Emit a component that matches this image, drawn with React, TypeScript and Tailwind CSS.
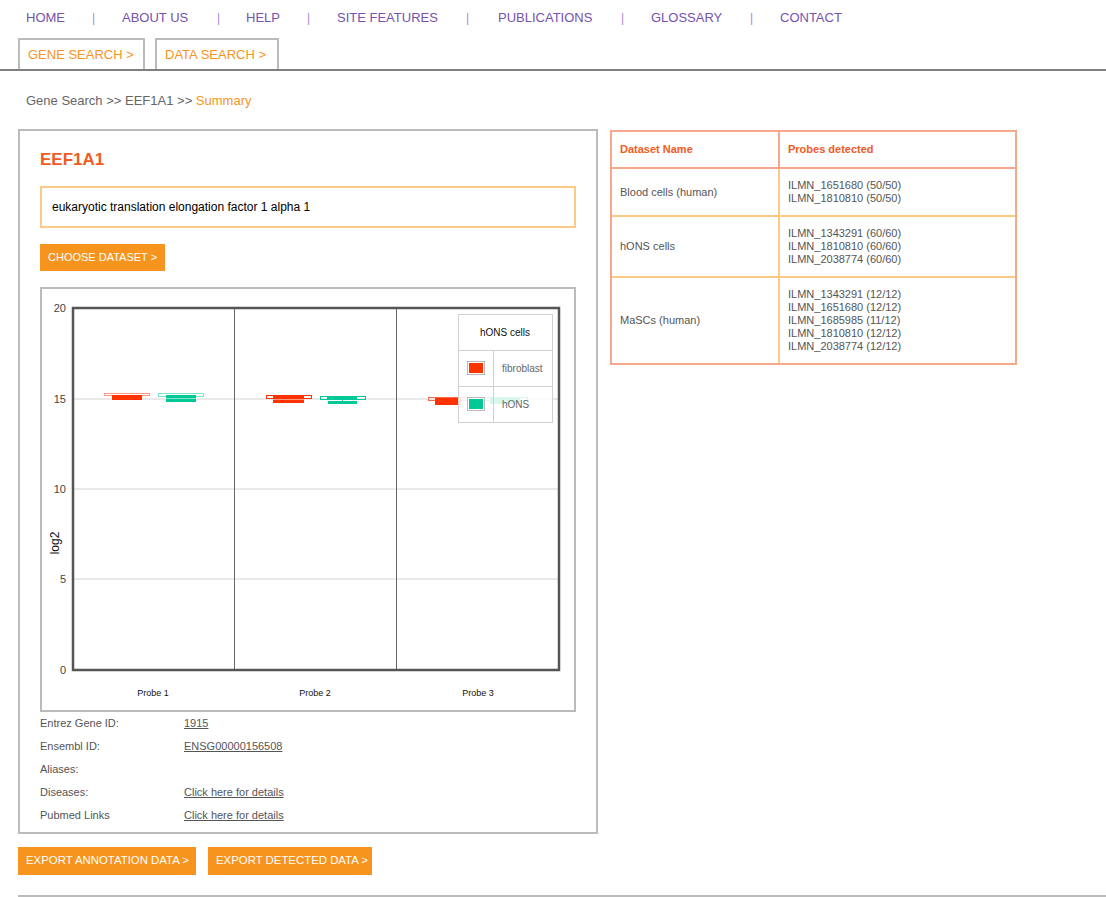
const navItems = [
  { label: "HOME", w: 66, s: 30 },
  { label: "ABOUT US", w: 95, s: 29 },
  { label: "HELP", w: 61, s: 30 },
  { label: "SITE FEATURES", w: 129, s: 32 },
  { label: "PUBLICATIONS", w: 123, s: 30 },
  { label: "GLOSSARY", w: 99, s: 30 },
  { label: "CONTACT", w: 80, s: 0 },
];

const info = [
  { label: "Entrez Gene ID:", value: "1915", link: true },
  { label: "Ensembl ID:", value: "ENSG00000156508", link: true },
  { label: "Aliases:", value: "", link: false },
  { label: "Diseases:", value: "Click here for details", link: true },
  { label: "Pubmed Links", value: "Click here for details", link: true },
];

const datasets = [
  { name: "Blood cells (human)", probes: ["ILMN_1651680 (50/50)", "ILMN_1810810 (50/50)"] },
  { name: "hONS cells", probes: ["ILMN_1343291 (60/60)", "ILMN_1810810 (60/60)", "ILMN_2038774 (60/60)"] },
  {
    name: "MaSCs (human)",
    probes: [
      "ILMN_1343291 (12/12)",
      "ILMN_1651680 (12/12)",
      "ILMN_1685985 (11/12)",
      "ILMN_1810810 (12/12)",
      "ILMN_2038774 (12/12)",
    ],
  },
];

const RED = "#ff3300";
const GREEN = "#00c896";

// coords are relative to the chart box inner corner (page x-42, y-289)
function BoxChart() {
  const yTicks = [
    { v: "20", y: 19 },
    { v: "15", y: 110 },
    { v: "10", y: 200 },
    { v: "5", y: 290 },
    { v: "0", y: 381 },
  ];
  return (
    <svg width="532" height="421" className="block" style={{ fontFamily: "'Liberation Sans', Arial, sans-serif" }}>
      {yTicks.map((t) => (
        <g key={t.v}>
          <line x1="31" x2="517" y1={t.y} y2={t.y} stroke="#d4d4d4" strokeWidth="1" />
          <text x="24" y={t.y + 4} fontSize="11" fill="#444" textAnchor="end">
            {t.v}
          </text>
        </g>
      ))}
      <line x1="192.5" x2="192.5" y1="19" y2="381" stroke="#666" />
      <line x1="354.5" x2="354.5" y1="19" y2="381" stroke="#666" />

      {/* probe 1 */}
      <rect x="62.5" y="104.5" width="45" height="2" fill="none" stroke="#ff9a80" />
      <rect x="70" y="106" width="30" height="5" fill={RED} />
      <rect x="116.5" y="104.5" width="45" height="3" fill="none" stroke="#7fe3c8" />
      <rect x="124" y="106" width="30" height="7" fill={GREEN} />
      <line x1="124" x2="154" y1="109.5" y2="109.5" stroke="#80e3cb" />
      {/* probe 2 */}
      <rect x="224.5" y="106.5" width="45" height="3" fill="none" stroke={RED} />
      <rect x="231" y="107" width="31" height="7" fill={RED} />
      <line x1="231" x2="262" y1="110.5" y2="110.5" stroke="#ff9a80" />
      <rect x="278.5" y="107.5" width="45" height="3" fill="none" stroke={GREEN} />
      <rect x="285" y="107" width="30" height="4" fill={GREEN} />
      <line x1="300.5" x2="300.5" y1="111" y2="113" stroke={GREEN} />
      <rect x="286" y="112" width="29" height="3" fill={GREEN} />
      {/* probe 3 */}
      <rect x="386.5" y="108.5" width="42" height="3" fill="none" stroke="#ff6a4a" />
      <rect x="393" y="109" width="26" height="7" fill={RED} />
      <rect x="440.5" y="108.5" width="45" height="3" fill="none" stroke={GREEN} />
      <rect x="448" y="109" width="30" height="6" fill={GREEN} />

      <rect x="31" y="19" width="486" height="362" fill="none" stroke="#555" strokeWidth="2.5" />

      {/* legend */}
      <g>
        <rect x="416.5" y="25.5" width="94" height="108" fill="#fff" fillOpacity="0.85" stroke="#d0d0d0" />
        <line x1="416.5" x2="510.5" y1="61.5" y2="61.5" stroke="#d0d0d0" />
        <line x1="416.5" x2="510.5" y1="97.5" y2="97.5" stroke="#d0d0d0" />
        <line x1="451.5" x2="451.5" y1="61.5" y2="133.5" stroke="#d0d0d0" />
        <text x="463" y="47" fontSize="10" fill="#111" textAnchor="middle">
          hONS cells
        </text>
        <rect x="425.5" y="72.5" width="17" height="13" fill="#fff" stroke="#bbb" />
        <rect x="427" y="74" width="14" height="10" fill={RED} />
        <text x="460" y="83" fontSize="10" fill="#666">
          fibroblast
        </text>
        <rect x="425.5" y="108.5" width="17" height="13" fill="#fff" stroke="#bbb" />
        <rect x="427" y="110" width="14" height="10" fill={GREEN} />
        <text x="460" y="119" fontSize="10" fill="#666">
          hONS
        </text>
      </g>

      <text x="0" y="0" fontSize="12" fill="#111" textAnchor="middle" transform="translate(17 254) rotate(-90)">
        log2
      </text>
      {[
        { l: "Probe 1", x: 111 },
        { l: "Probe 2", x: 273 },
        { l: "Probe 3", x: 436 },
      ].map((p) => (
        <text key={p.l} x={p.x} y="407" fontSize="9" fill="#111" textAnchor="middle">
          {p.l}
        </text>
      ))}
    </svg>
  );
}

export default function App() {
  return (
    <div className="w-[1106px] min-h-[897px] bg-white font-['Liberation_Sans',Arial,sans-serif]">
      {/* top nav */}
      <div className="flex items-center h-[34px] pt-[2px] pl-[26px] text-[13px] text-[#7552b0]">
        {navItems.map((item) => (
          <div key={item.label} className="flex items-center">
            <span style={{ width: item.w }} className="whitespace-nowrap">
              {item.label}
            </span>
            {item.s > 0 && (
              <span style={{ width: item.s }} className="text-[#a48bd6] text-[12px]">
                |
              </span>
            )}
          </div>
        ))}
      </div>

      <div className="flex items-end gap-[10px] pl-[18px] mt-[4px] border-b-2 border-[#808080]">
        <div className="h-[31px] w-[127px] border-2 border-b-0 border-[#bbb] pl-[8px] flex items-center text-[13px] text-[#f7941d]">
          GENE SEARCH &gt;
        </div>
        <div className="h-[31px] w-[124px] border-2 border-b-0 border-[#bbb] pl-[8px] flex items-center text-[13px] text-[#f7941d]">
          DATA SEARCH &gt;
        </div>
      </div>

      <div className="pl-[18px]">
        <div className="pl-[8px] mt-[22px] h-[16px] text-[13px] leading-[16px] text-[#666]">
          Gene Search &gt;&gt; EEF1A1 &gt;&gt; <span className="text-[#f7941d]">Summary</span>
        </div>

        <div className="flex items-start gap-[12px] mt-[20px]">
          {/* left panel */}
          <div className="w-[580px]">
            <div className="border-2 border-[#bbb] px-[20px] pt-[19px] pb-[5px]">
              <div className="text-[17px] leading-[20px] font-bold text-[#f15a22]">EEF1A1</div>
              <div className="mt-[16px] h-[42px] border-2 border-[#fdc987] pl-[10px] flex items-center text-[12px] text-black">
                eukaryotic translation elongation factor 1 alpha 1
              </div>
              <div className="mt-[16px] inline-flex items-center h-[27px] px-[8px] bg-[#f7941d] text-white text-[11px]">
                CHOOSE DATASET &gt;
              </div>
              <div className="mt-[16px] border-2 border-[#bbb]">
                <BoxChart />
              </div>
              <div className="text-[11px] text-[#555]">
                {info.map((r) => (
                  <div key={r.label} className="flex h-[23px] items-center">
                    <span className="w-[144px]">{r.label}</span>
                    {r.link ? <span className="underline">{r.value}</span> : null}
                  </div>
                ))}
              </div>
            </div>
            <div className="flex gap-[12px] mt-[13px]">
              <div className="h-[28px] w-[178px] pl-[8px] flex items-center bg-[#f7941d] text-white text-[11.4px] whitespace-nowrap">
                EXPORT ANNOTATION DATA &gt;
              </div>
              <div className="h-[28px] w-[164px] pl-[8px] flex items-center bg-[#f7941d] text-white text-[11.4px] whitespace-nowrap">
                EXPORT DETECTED DATA &gt;
              </div>
            </div>
          </div>

          {/* datasets table */}
          <div className="w-[407px] mt-[1px] border-2 border-[#f7a88b] text-[11px] leading-[13px]">
            <div className="flex h-[37px] border-b-2 border-[#f7a88b]">
              <div className="w-[168px] border-r-2 border-[#f7a88b] pl-[8px] flex items-center font-bold text-[#f15a22]">
                Dataset Name
              </div>
              <div className="flex-1 pl-[8px] flex items-center font-bold text-[#f15a22]">Probes detected</div>
            </div>
            {datasets.map((d, i) => (
              <div key={d.name} className={i > 0 ? "flex border-t-2 border-[#fdc987]" : "flex"}>
                <div className="w-[168px] border-r-2 border-[#fdc987] pl-[8px] flex items-center text-[#555]">
                  {d.name}
                </div>
                <div className="flex-1 pl-[8px] py-[10px] text-[#555]">
                  {d.probes.map((p) => (
                    <div key={p}>{p}</div>
                  ))}
                </div>
              </div>
            ))}
          </div>
        </div>

        <div className="mt-[20px] border-b-2 border-[#bbb]" />
      </div>
    </div>
  );
}
